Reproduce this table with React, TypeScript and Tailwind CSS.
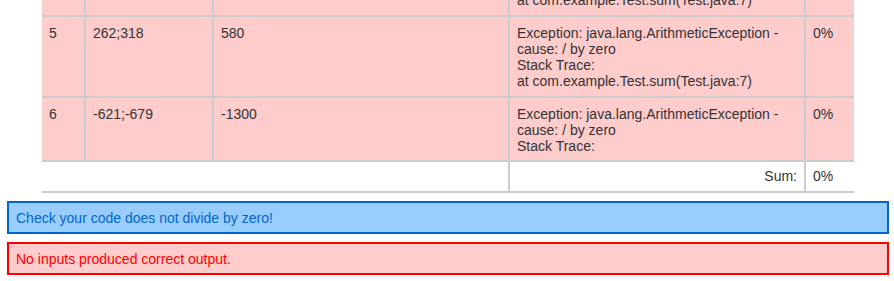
const trace = [
  "Exception: java.lang.ArithmeticException -",
  "cause: / by zero",
  "Stack Trace:",
  "at com.example.Test.sum(Test.java:7)",
];

// row 4 is scrolled mostly out of view; only the tail of its trace shows
const rows = [
  { n: "", input: "", expected: "", output: trace.slice(3), score: "", pb: "pb-[7px]" },
  { n: "5", input: "262;318", expected: "580", output: trace, score: "0%", pb: "pb-[7px]" },
  { n: "6", input: "-621;-679", expected: "-1300", output: trace.slice(0, 3), score: "0%", pb: "pb-[6px]" },
];

function Cell({ w, pb, last, children }: { w: string; pb: string; last?: boolean; children?: React.ReactNode }) {
  return (
    <div className={`${w} ${pb} shrink-0 pl-[7px] pr-[7px] pt-[8px] ${last ? "" : "border-r-2 border-[#cccccc]"}`}>
      {children}
    </div>
  );
}

export default function App() {
  return (
    <div className="w-[894px] h-[281px] overflow-hidden bg-white text-[14px] leading-[16px] text-[#333333] font-['Liberation_Sans',Arial,sans-serif]">
      {/* results table (scrolled, top cut off) */}
      <div className="ml-[42px] w-[812px] -mt-[16px]">
        {rows.map((r, idx) => (
          <div key={idx} className="flex bg-[#ffcccc] border-b-2 border-[#cccccc]">
            <Cell w="w-[44px]" pb={r.pb}>{r.n}</Cell>
            <Cell w="w-[128px]" pb={r.pb}>{r.input}</Cell>
            <Cell w="w-[296px]" pb={r.pb}>{r.expected}</Cell>
            <Cell w="w-[296px]" pb={r.pb}>
              {r.output.map((line, i) => (
                <div key={i}>{line}</div>
              ))}
            </Cell>
            <Cell w="w-[48px]" pb={r.pb} last>
              {r.score}
            </Cell>
          </div>
        ))}
        <div className="flex h-[31px] border-b-2 border-[#cccccc] bg-white">
          <div className="w-[468px] shrink-0 border-r-2 border-[#cccccc]" />
          <div className="w-[296px] shrink-0 border-r-2 border-[#cccccc] pt-[6px] pr-[7px] text-right">Sum:</div>
          <div className="w-[48px] shrink-0 pt-[6px] pl-[7px]">0%</div>
        </div>
      </div>

      {/* feedback messages */}
      <div className="ml-[7px] w-[882px] mt-[8px] flex flex-col gap-[8px]">
        <div className="h-[33px] flex items-center px-[7px] border-2 border-[#0066cc] bg-[#99ccff] text-[#0066cc]">
          Check your code does not divide by zero!
        </div>
        <div className="h-[33px] flex items-center px-[7px] border-2 border-[#ff0000] bg-[#ffcccc] text-[#ff0000]">
          No inputs produced correct output.
        </div>
      </div>
    </div>
  );
}
